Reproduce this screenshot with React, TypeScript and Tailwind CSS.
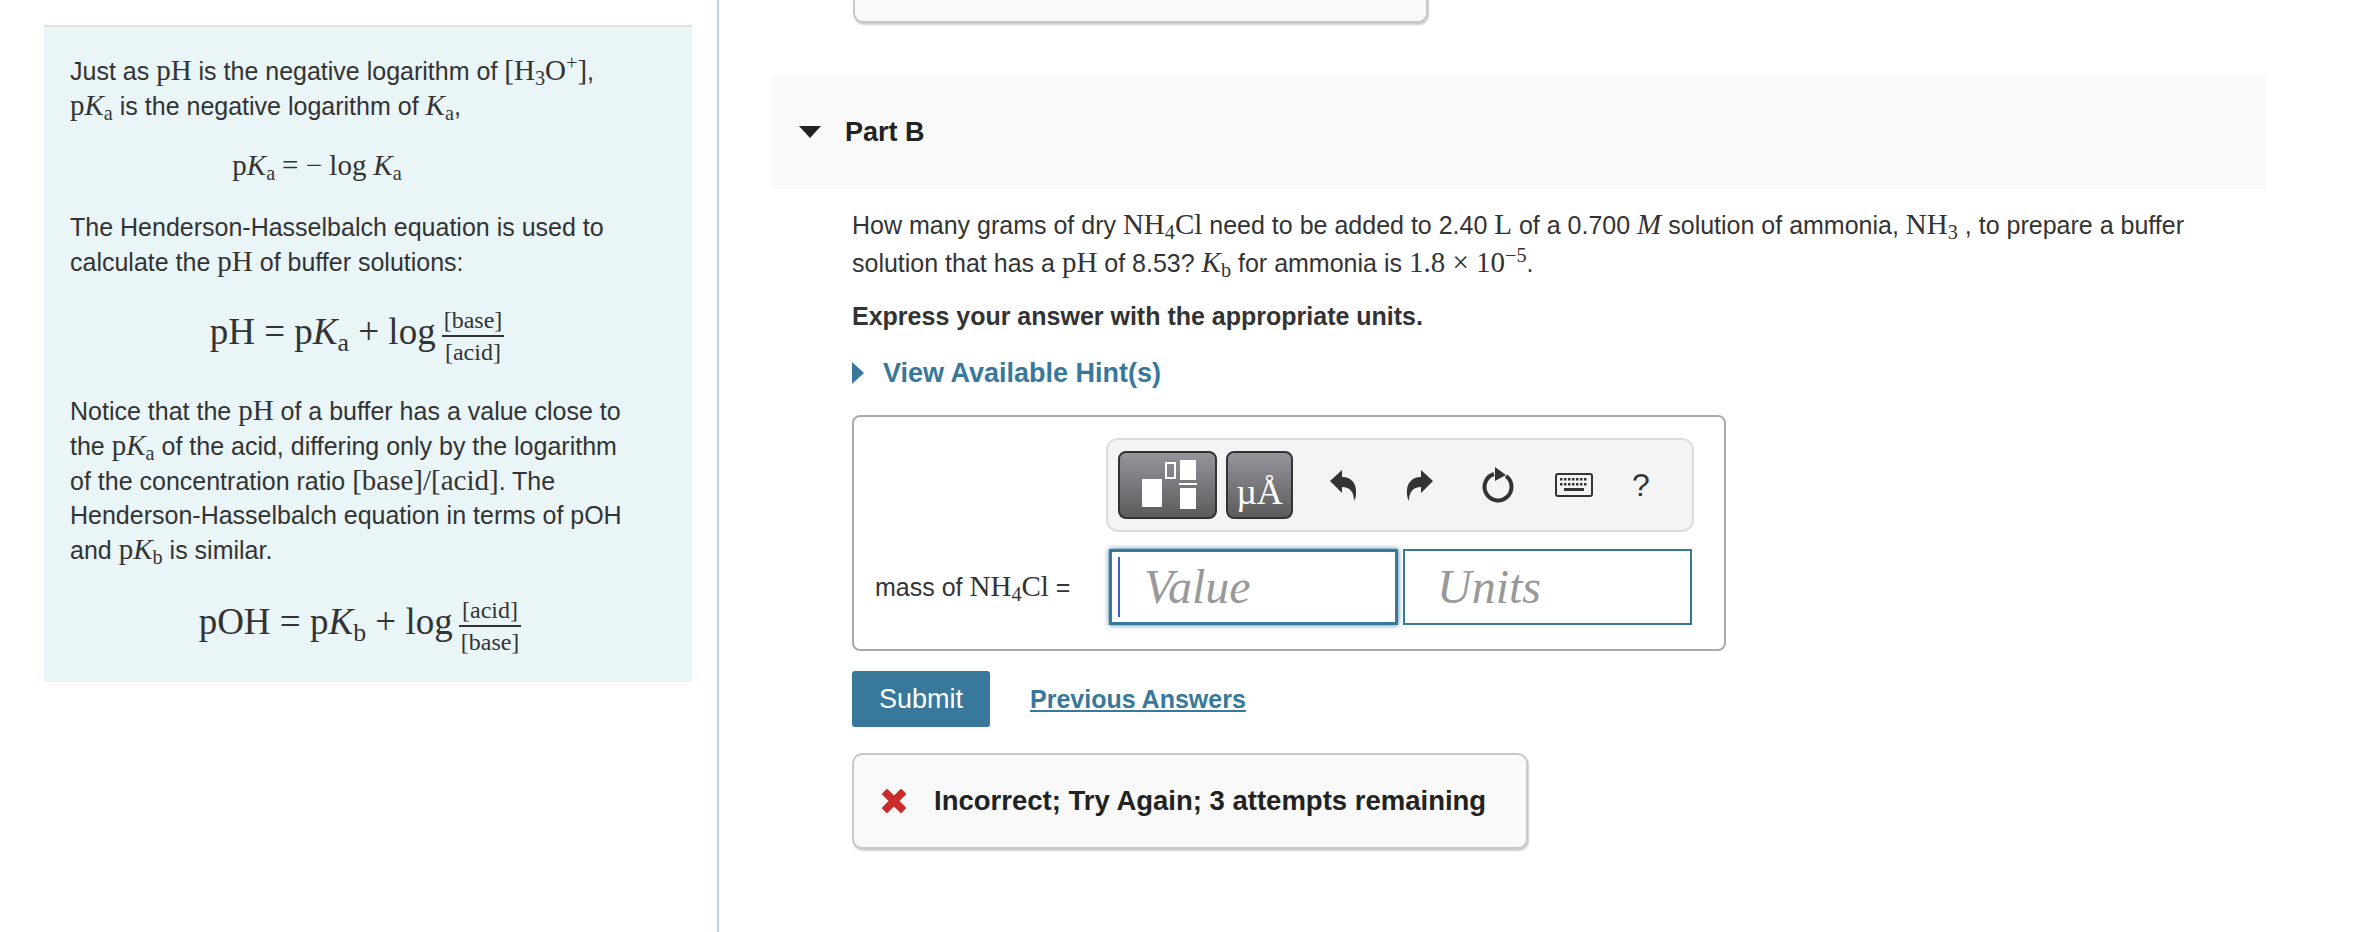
import React from 'react';

const M: React.FC<{ children: React.ReactNode; className?: string }> = ({ children, className = '' }) => (
  <span className={`font-['Liberation_Serif',serif] ${className}`}>{children}</span>
);

const K: React.FC<{ sub?: string }> = ({ sub }) => (
  <M className="text-[1.16em]">
    <i>K</i>
    {sub && <sub className="text-[0.7em] leading-none align-[-0.25em] bottom-auto">{sub}</sub>}
  </M>
);

const Mt: React.FC<{ children: React.ReactNode }> = ({ children }) => <M className="text-[1.16em]">{children}</M>;

const Sub: React.FC<{ children: React.ReactNode }> = ({ children }) => (
  <sub className="text-[0.7em] leading-none align-[-0.25em] bottom-auto">{children}</sub>
);

const Frac: React.FC<{ top: string; bottom: string }> = ({ top, bottom }) => (
  <span className="inline-flex flex-col items-center align-middle mx-[6px] text-[24px] leading-[30px]">
    <span className="px-[2px] border-b-2 border-[#333] w-full text-center">{top}</span>
    <span className="px-[2px]">{bottom}</span>
  </span>
);

const TemplateIcon = () => (
  <svg width="66" height="54" viewBox="0 0 66 54">
    <rect x="7" y="21" width="20" height="28" fill="#fff" />
    <rect x="31" y="5" width="9" height="15" fill="none" stroke="#fff" strokeWidth="2" />
    <rect x="45" y="2" width="16" height="20" fill="#fff" />
    <rect x="44" y="25" width="18" height="2" fill="#fff" />
    <rect x="45" y="30" width="16" height="21" fill="#fff" />
  </svg>
);

const UndoIcon: React.FC<{ flip?: boolean }> = ({ flip }) => (
  <svg width="28" height="34" viewBox="0 0 28 34" className={flip ? '-scale-x-100' : ''}>
    <path d="M1 13 L13 2 L13 9 C22 9 28 15 27 26 C27 29 26 31 25 33 C25 24 21 19 13 19 L13 25 Z" fill="#333" />
  </svg>
);

const ReloadIcon = () => (
  <svg width="34" height="38" viewBox="0 0 34 38">
    <path d="M13 8 A13.5 13.5 0 1 0 25 10" fill="none" stroke="#333" strokeWidth="4" />
    <path d="M14 1 L25 9 L14 15 Z" fill="#333" />
  </svg>
);

const KeyboardIcon = () => (
  <svg width="38" height="24" viewBox="0 0 38 24">
    <rect x="1" y="1" width="36" height="22" rx="2" fill="#f4f4f4" stroke="#333" strokeWidth="2" />
    {[0, 1, 2, 3, 4, 5, 6].map((i) => (
      <rect key={i} x={5 + i * 4} y="5" width="2.5" height="2.5" fill="#333" />
    ))}
    {[0, 1, 2, 3, 4, 5, 6].map((i) => (
      <rect key={i} x={5 + i * 4} y="10" width="2.5" height="2.5" fill="#333" />
    ))}
    <rect x="9" y="15" width="20" height="3" fill="#333" />
  </svg>
);

export default function App() {
  return (
    <div className="flex h-[932px] w-[2354px] overflow-hidden bg-white font-['Liberation_Sans',sans-serif] text-[25px] leading-[34px] text-[#333]">
      {/* Panel de ayuda */}
      <div className="w-[719px] shrink-0 border-r-2 border-[#c5d3e0] pl-[44px] pr-[25px] pt-[25px]">
        <div className="h-[657px] border-t-2 border-[#dfe3e4] bg-[#e9f5f7] px-[26px] pt-[26px]">
          <p>
            Just as <Mt>pH</Mt> is the negative logarithm of <Mt>[H<Sub>3</Sub>O<sup className="text-[0.7em] leading-none">+</sup>]</Mt>,
            <br />
            <Mt>p</Mt><K sub="a" /> is the negative logarithm of <K sub="a" />,
          </p>
          <p className="mt-[24px] text-center pr-[102px]">
            <Mt>p</Mt><K sub="a" /> <Mt>= − log</Mt> <K sub="a" />
          </p>
          <p className="mt-[27px]">
            The Henderson-Hasselbalch equation is used to
            <br />
            calculate the <Mt>pH</Mt> of buffer solutions:
          </p>
          <div className="mt-[22px] flex justify-center pr-[16px] font-['Liberation_Serif',serif] text-[37px] leading-[62px]">
            <span>pH = p<i>K</i><Sub>a</Sub> + log<Frac top="[base]" bottom="[acid]" /></span>
          </div>
          <p className="mt-[26px]">
            Notice that the <Mt>pH</Mt> of a buffer has a value close to
            <br />
            the <Mt>p</Mt><K sub="a" /> of the acid, differing only by the logarithm
            <br />
            of the concentration ratio <Mt>[base]/[acid]</Mt>. The
            <br />
            Henderson-Hasselbalch equation in terms of pOH
            <br />
            and <Mt>p</Mt><K sub="b" /> is similar.
          </p>
          <div className="mt-[24px] flex justify-center pr-[10px] font-['Liberation_Serif',serif] text-[37px] leading-[62px]">
            <span>pOH = p<i>K</i><Sub>b</Sub> + log<Frac top="[acid]" bottom="[base]" /></span>
          </div>
        </div>
      </div>

      {/* Pregunta */}
      <div className="flex-1 pl-[53px] pr-[88px]">
        <div className="-mt-[20px] ml-[81px] h-[43px] w-[575px] rounded-b-[10px] border-2 border-t-0 border-[#c8c8c8] bg-[#f9f9f9] shadow-[1px_2px_2px_rgba(0,0,0,0.2)]" />

        <div className="mt-[53px] flex h-[113px] items-center bg-[#f9f9f9] pl-[27px] pb-[2px]">
          <span className="h-0 w-0 border-x-[11px] border-t-[12px] border-x-transparent border-t-[#222]" />
          <span className="ml-[24px] text-[27px] font-bold text-[#222]">Part B</span>
        </div>

        <div className="ml-[80px]">
          <p className="mt-[17px] whitespace-nowrap leading-[37px]">
            How many grams of dry <Mt>NH<Sub>4</Sub>Cl</Mt> need to be added to 2.40 <Mt>L</Mt> of a 0.700 <Mt><i>M</i></Mt> solution of ammonia, <Mt>NH<Sub>3</Sub></Mt> , to prepare a buffer
            <br />
            solution that has a <Mt>pH</Mt> of 8.53? <K sub="b" /> for ammonia is <Mt>1.8 × 10<sup className="text-[0.7em] leading-none">−5</sup></Mt>.
          </p>
          <p className="mt-[17px] font-bold">Express your answer with the appropriate units.</p>

          <div className="mt-[23px] flex items-center text-[27px] font-bold text-[#37789b]">
            <span className="h-0 w-0 border-y-[11px] border-l-[12px] border-y-transparent border-l-[#37789b]" />
            <span className="ml-[19px]">View Available Hint(s)</span>
          </div>

          <div className="mt-[25px] h-[236px] w-[874px] rounded-[8px] border-2 border-[#aaa] pt-[21px]">
            <div className="ml-[252px] flex h-[94px] w-[588px] items-center rounded-[12px] border-2 border-[#ddd] bg-[#f4f4f4] pl-[10px]">
              <div className="flex h-[68px] w-[99px] items-center justify-center rounded-[8px] border-2 border-[#333] bg-gradient-to-b from-[#96949c] to-[#5c5c5c]">
                <TemplateIcon />
              </div>
              <div className="ml-[9px] flex h-[68px] w-[67px] items-end justify-center rounded-[8px] border-2 border-[#333] bg-gradient-to-b from-[#96949c] to-[#5c5c5c] pb-[5px] font-['Liberation_Serif',serif] text-[36px] leading-[40px] text-white">
                µÅ
              </div>
              <div className="ml-[36px] flex w-[28px] justify-center"><UndoIcon /></div>
              <div className="ml-[49px] flex w-[28px] justify-center"><UndoIcon flip /></div>
              <div className="ml-[47px] flex w-[34px] justify-center"><ReloadIcon /></div>
              <div className="ml-[40px] flex w-[38px] justify-center"><KeyboardIcon /></div>
              <span className="ml-[39px] text-[32px] leading-none">?</span>
            </div>
            <div className="mt-[17px] flex items-center pl-[21px]">
              <span className="w-[234px] whitespace-nowrap">mass of <Mt>NH<Sub>4</Sub>Cl</Mt> =</span>
              <div className="flex h-[76px] w-[289px] items-center border-[3px] border-[#37789b] pl-[6px] shadow-[0_0_5px_#37789b]">
                <span className="h-[60px] w-[2px] bg-[#3b5fd9]" />
                <span className="ml-[24px] font-['Liberation_Serif',serif] text-[48px] italic text-[#999]">Value</span>
              </div>
              <div className="ml-[5px] flex h-[76px] w-[289px] items-center border-2 border-[#37789b] pl-[32px]">
                <span className="font-['Liberation_Serif',serif] text-[48px] italic text-[#999]">Units</span>
              </div>
            </div>
          </div>

          <div className="mt-[20px] flex items-center">
            <button className="h-[56px] w-[138px] rounded-[3px] bg-[#37789b] text-[27px] text-white">Submit</button>
            <a className="ml-[40px] text-[25px] font-bold text-[#37789b] underline">Previous Answers</a>
          </div>

          <div className="mt-[26px] flex h-[96px] w-[676px] items-center rounded-[10px] border-2 border-[#c8c8c8] bg-[#f9f9f9] pl-[26px] text-[27.5px] font-bold text-[#222] shadow-[1px_2px_2px_rgba(0,0,0,0.2)]">
            <svg width="28" height="28" viewBox="0 0 28 28">
              <path d="M3 7 L7 3 L14 10 L21 3 L25 7 L18 14 L25 21 L21 25 L14 18 L7 25 L3 21 L10 14 Z" fill="#cc2b2b" stroke="#cc2b2b" strokeWidth="2" strokeLinejoin="round" />
            </svg>
            <span className="ml-[26px] whitespace-nowrap">Incorrect; Try Again; 3 attempts remaining</span>
          </div>
        </div>
      </div>
    </div>
  );
}
